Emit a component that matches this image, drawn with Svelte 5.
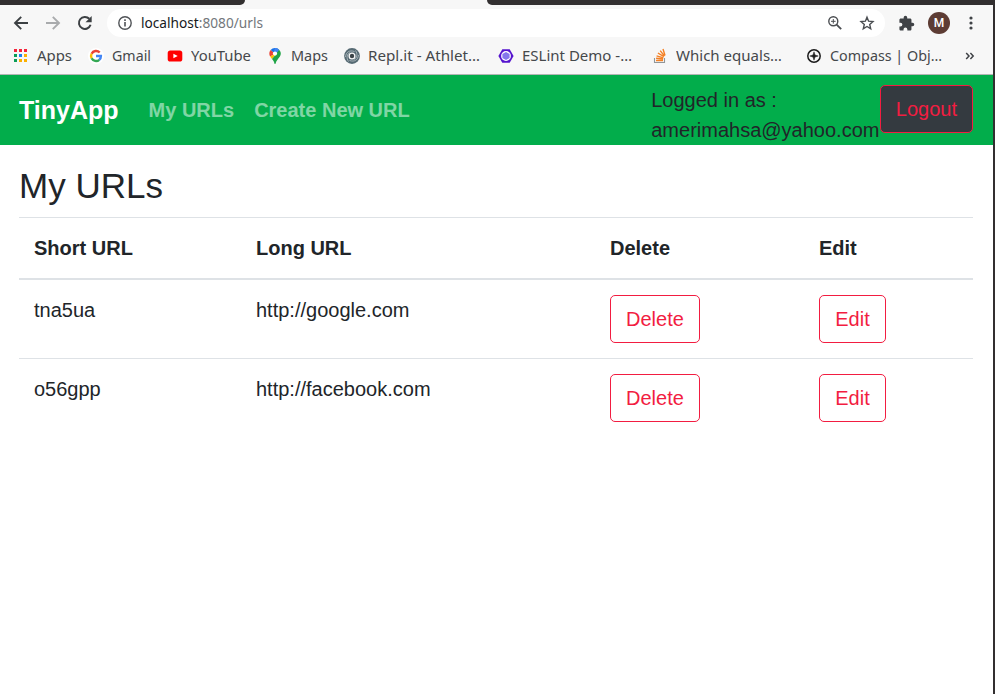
<script>
  const bookmarks = [
    { id: 'apps', label: 'Apps', left: 12, width: 35 },
    { id: 'gmail', label: 'Gmail', left: 88, width: 39 },
    { id: 'youtube', label: 'YouTube', left: 167, width: 60 },
    { id: 'maps', label: 'Maps', left: 267, width: 37 },
    { id: 'replit', label: 'Repl.it - Athlet…', left: 344, width: 112 },
    { id: 'eslint', label: 'ESLint Demo -…', left: 498, width: 110 },
    { id: 'stack', label: 'Which equals…', left: 652, width: 106 },
    { id: 'compass', label: 'Compass | Obj…', left: 806, width: 112 }
  ].map((b, i, all) => ({ ...b, slot: (all[i + 1]?.left ?? 965) - b.left }));

  const dots = ['#f5243b', '#f5243b', '#f5243b', '#0a9d58', '#1a80f0', '#fbb000', '#0a9d58', '#fbb000', '#fbb000'];
  const urls = [
    { short: 'tna5ua', long: 'http://google.com' },
    { short: 'o56gpp', long: 'http://facebook.com' }
  ];
</script>

<div class="window">
  <div class="tabs"><i class="tab left"></i><i class="tab right"></i></div>

  <div class="toolbar">
    <svg class="back" width="16" height="16" viewBox="0 0 16 16" fill="none" stroke="#3c4043" stroke-width="1.9"><path d="M15 8H2.200M8.200 1.800 2 8l6.200 6.200" /></svg>
    <svg class="forward" width="16" height="16" viewBox="0 0 16 16" fill="none" stroke="#a9abad" stroke-width="1.900"><path d="M1 8h12.800M7.800 1.800 14 8l-6.200 6.200" /></svg>
    <svg class="reload" width="16" height="16" viewBox="0 0 16 16"><path d="M13.600 9.800A6 6 0 1 1 12.300 3.800" fill="none" stroke="#3c4043" stroke-width="2" /><path d="M14.700 1v6.200H8.500z" fill="#3c4043" /></svg>
    <div class="address">
      <svg class="info" width="14" height="14" viewBox="0 0 14 14"><circle cx="7" cy="7" r="6.200" fill="none" stroke="#505357" stroke-width="1.400" /><path d="M6.200 6h1.600v4.500H6.200zM6.200 3.300h1.600v1.600H6.200z" fill="#505357" /></svg>
      <svg class="url" width="123" height="22"><text x="0" y="16" textLength="122" lengthAdjust="spacingAndGlyphs"><tspan fill="#17191c">localhost</tspan><tspan fill="#73777b">:8080/urls</tspan></text></svg>
      <span class="grow"></span>
      <svg class="zoom" width="14" height="14" viewBox="0 0 14 14" fill="none" stroke="#4a4d51"><circle cx="5.300" cy="5.300" r="4.500" stroke-width="1.400" /><path d="m8.600 8.600 4.600 4.600" stroke-width="1.800" /><path d="M3 5.300h4.600M5.300 3v4.600" stroke-width="1" /></svg>
      <svg class="star" width="16" height="16" viewBox="0 0 16 16"><path d="m8 2.200 1.600 4 4.400.4-3.300 2.900 1 4.300L8 11.500l-3.700 2.300 1-4.300L2 6.600l4.400-.4z" fill="none" stroke="#4a4d51" stroke-width="1.400" /></svg>
    </div>
    <svg class="puzzle" width="17" height="17" viewBox="0 0 24 24"><path fill="#3f4246" d="M20.500 11H19V7c0-1.100-.9-2-2-2h-4V3.500a2.500 2.500 0 0 0-5 0V5H4c-1.100 0-2 .9-2 2v3.800h1.500a2.700 2.700 0 0 1 0 5.400H2V20c0 1.100.9 2 2 2h3.800v-1.500a2.700 2.700 0 0 1 5.400 0V22H17c1.100 0 2-.9 2-2v-4h1.500a2.500 2.500 0 0 0 0-5z" /></svg>
    <span class="avatar">M</span>
    <svg class="kebab" width="4" height="14" viewBox="0 0 4 14" fill="#3f4246"><circle cx="2" cy="2" r="1.600" /><circle cx="2" cy="7" r="1.600" /><circle cx="2" cy="12" r="1.600" /></svg>
  </div>

  <div class="bookmarks">
    {#each bookmarks as b}
      <div class="bookmark" style="width:{b.slot}px">
        <svg width="16" height="16" viewBox="0 0 16 16">
          {#if b.id === 'apps'}
            {#each dots as color, i}
              <rect x={2 + (i % 3) * 5} y={1 + Math.floor(i / 3) * 5} width="3" height="3" fill={color} />
            {/each}
          {:else if b.id === 'gmail'}
            <circle cx="8" cy="8" r="8" fill="#fff" />
            <g fill="none" stroke-width="2.400">
              <path d="M3.600 5.700A5 5 0 0 1 11.700 4.500" stroke="#ea4335" />
              <path d="M3.600 5.700a5 5 0 0 0 0 4.600" stroke="#fbbc05" />
              <path d="M3.600 10.300a5 5 0 0 0 7.700 1.500" stroke="#34a853" />
              <path d="M8 8h4.900a5 5 0 0 1-1.700 3.900" stroke="#4285f4" />
            </g>
          {:else if b.id === 'youtube'}
            <rect x="0.700" y="2.500" width="14.600" height="11" rx="2.600" fill="#f00" /><path d="M6.400 5.700 10.700 8l-4.300 2.300z" fill="#fff" />
          {:else if b.id === 'maps'}
            <path d="M8 0a5.700 5.700 0 0 0-4.400 2L8 6l3.500-4.800A5.700 5.700 0 0 0 8 0z" fill="#1a73e8" />
            <path d="M3.600 2a5.800 5.800 0 0 0-.5 6.400L8 5.800z" fill="#ea4335" />
            <path d="M3.100 8.400 5 11l6-7.500L8 5.800z" fill="#fbbc04" />
            <path d="M10 .4C14 2 14.600 5.800 12.900 8.400 11 11 9.300 12.500 8.600 15.400q-.6 1.200-1.200 0C7 13.300 6.200 12.300 5 11l5-6z" fill="#1ea446" />
            <path d="M8 0c2 0 3 .6 4.200 1.700L9.500 5.300 7 3.500z" fill="#4285f4" />
            <circle cx="8" cy="5.600" r="2.100" fill="#fff" />
          {:else if b.id === 'replit'}
            <circle cx="8" cy="8" r="7.900" fill="#566a73" />
            <g fill="none" stroke="#b9c3c7" stroke-width=".8"><path d="M1.500 9C2 4 5.500 1.800 10.500 3.500M14.500 7c-.5 5-4 7.200-9 5.500M4.500 13.500C2 10 3 5.800 6 4.600M11.500 2.500c2.500 3.500 1.500 7.700-1.500 8.900" /></g>
            <circle cx="8" cy="8" r="3.500" fill="#f7f7f7" /><circle cx="8" cy="8" r="2.200" fill="#3b4347" />
          {:else if b.id === 'eslint'}
            <path d="M4.300 1.200h7.400L15.600 8l-3.900 6.800H4.300L.4 8z" fill="#5514ce" /><circle cx="8" cy="8" r="4.900" fill="#fff" /><path d="m8 3.900 3.600 2v4.200L8 12.100l-3.600-2V5.900z" fill="#8577ec" />
          {:else if b.id === 'stack'}
            <path d="M2.500 10v4.500h10V10" fill="none" stroke="#929699" stroke-width="1.100" />
            <path d="M4 12.500h7M4.100 10.300l7 .7M4.600 7.800l6.800 2M5.900 5l6 3.700M8.200 2.600l4.300 5.500M11 1l2 6.500" fill="none" stroke="#f48024" stroke-width="1.400" />
          {:else}
            <circle cx="8" cy="8" r="6.200" fill="none" stroke="#1b1b1b" stroke-width="1.500" /><path d="M8 3.800 9 7l3.200 1L9 9 8 12.200 7 9 3.800 8 7 7z" fill="#1b1b1b" stroke="#1b1b1b" stroke-width=".5" />
          {/if}
        </svg>
        <svg class="label" class:apps={b.id === 'apps'} width={b.width + 8} height="22"><text x="0" y="16" textLength={b.width} lengthAdjust="spacingAndGlyphs">{b.label}</text></svg>
      </div>
    {/each}
    <svg width="10" height="10" viewBox="0 0 10 10" fill="none" stroke="#3f4246" stroke-width="1.500"><path d="m1.200 2 2.800 3-2.800 3M5.400 2l2.800 3-2.800 3" /></svg>
  </div>

  <nav>
    <a class="brand" href="#home">TinyApp</a>
    <a class="link" href="#urls">My URLs</a>
    <a class="link" href="#new">Create New URL</a>
    <form class="session">
      <span class="user">Logged in as : amerimahsa@yahoo.com</span>
      <button type="button" class="btn logout">Logout</button>
    </form>
  </nav>

  <main>
    <h3>My URLs</h3>
    <table>
      <colgroup><col class="c1" /><col class="c2" /><col class="c3" /><col class="c4" /></colgroup>
      <thead><tr><th>Short URL</th><th>Long URL</th><th>Delete</th><th>Edit</th></tr></thead>
      <tbody>
        {#each urls as u}
          <tr>
            <td>{u.short}</td><td>{u.long}</td>
            <td><button type="button" class="btn">Delete</button></td>
            <td><button type="button" class="btn edit">Edit</button></td>
          </tr>
        {/each}
      </tbody>
    </table>
  </main>
</div>

<style>
  .window { box-sizing: border-box; width: 995px; height: 694px; border-right: 2px solid #322f30; background: #fff; color: #212529; font: 20px/30px "Liberation Sans", Arial, sans-serif; overflow: hidden; }
  .window svg { display: block; flex: none; }
  .tabs { height: 5px; display: flex; justify-content: space-between; background: #f7f7f7; }
  .tab { background: #322f30; }
  .left { width: 245px; border-bottom-right-radius: 6px; }
  .right { width: 506px; border-bottom-left-radius: 6px; }
  .toolbar { height: 36px; display: flex; align-items: center; background: #f7f7f7; padding-left: 13px; }
  .forward { margin-left: 16px; }
  .reload { margin-left: 16px; }
  .address { display: flex; align-items: center; box-sizing: border-box; width: 778px; height: 28px; margin-left: 14px; border-radius: 14px; background: #fff; padding: 0 10px 0 11px; }
  .url { margin-left: 9px; font: 14.5px "Noto Sans", sans-serif; }
  .grow { flex: 1; }
  .star { margin-left: 17px; }
  .puzzle { margin-left: 13px; }
  .avatar { width: 22px; height: 22px; margin-left: 13px; border-radius: 50%; background: #5d3c34; color: #fff; text-align: center; font: 500 12px/22px Roboto, sans-serif; }
  .kebab { margin-left: 19px; }
  .bookmarks { box-sizing: border-box; height: 34px; display: flex; align-items: center; padding: 0 0 4px 12px; background: #f7f7f7; border-bottom: 1px solid #b3b5b4; }
  .bookmark { display: flex; align-items: center; gap: 8px; flex: none; }
  .label { font: 15px "Noto Sans", sans-serif; fill: #45484b; }
  .apps { margin-left: 1px; }
  nav { height: 70px; box-sizing: border-box; display: flex; align-items: center; padding: 0 20px 0 19px; background: #02ad4b; }
  nav a { text-decoration: none; font-weight: 700; }
  .brand { color: #fff; font-size: 25px; margin-right: 30px; }
  .link { color: rgba(255, 255, 255, .5); margin-right: 20px; }
  .session { display: flex; align-items: flex-start; height: 50px; margin-left: auto; }
  .user { width: 228.600px; }
  .btn { box-sizing: border-box; display: block; height: 48px; border: 1px solid #f21d41; border-radius: 5px; background: transparent; color: #f21d41; padding: 0 15px; font: 20px/30px "Liberation Sans", Arial, sans-serif; }
  .edit { width: 67px; }
  .logout { background: #343a40; }
  main { padding: 20px 20px 0 19px; }
  h3 { margin: 0 0 10px; font-size: 35px; line-height: 42px; font-weight: 400; }
  table { width: 954px; table-layout: fixed; border-collapse: separate; border-spacing: 0; }
  .c1 { width: 222px; }
  .c2 { width: 354px; }
  .c3 { width: 209px; }
  .c4 { width: 169px; }
  th, td { padding: 15px; text-align: left; vertical-align: top; border-top: 1px solid #dee2e6; }
  th { border-bottom: 2px solid #dee2e6; }
  tbody tr:first-child td { border-top: 0; }
</style>
